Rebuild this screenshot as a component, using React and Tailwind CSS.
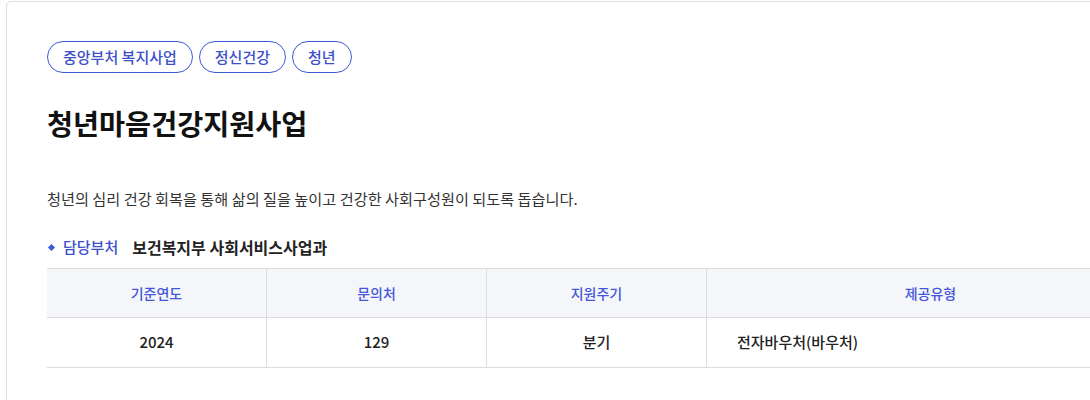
const tags = ["중앙부처 복지사업", "정신건강", "청년"];

const columns = ["기준연도", "문의처", "지원주기", "제공유형"];

export default function App() {
    return (
        <div
            className="w-[1090px] h-[400px] overflow-hidden bg-white"
            style={{ fontFamily: '"Noto Sans CJK KR", "Noto Sans", sans-serif' }}
        >
            <div className="ml-[6px] mt-[1px] w-[1190px] h-[420px] border border-[#dddddd] rounded-[5px] pl-[40px] pt-[39px]">
                {/* tags */}
                <div className="flex gap-[6px]">
                    {tags.map((t) => (
                        <span
                            key={t}
                            className="h-[32px] px-[15px] flex items-center rounded-full border border-[#3d5bd6] text-[#3d4fc9] text-[15px] font-medium"
                        >
                            {t}
                        </span>
                    ))}
                </div>

                <h1 className="mt-[30px] text-[28.3px] leading-[40px] font-bold text-[#111111]">
                    청년마음건강지원사업
                </h1>

                <p className="mt-[43px] text-[15.2px] leading-[24px] text-[#333333]">
                    청년의 심리 건강 회복을 통해 삶의 질을 높이고 건강한 사회구성원이 되도록 돕습니다.
                </p>

                <div className="mt-[25px] flex items-center text-[15px] leading-[24px]">
                    <span className="w-[5px] h-[5px] bg-[#3d5bd6] rotate-45 ml-[2px] mr-[9px]"></span>
                    <span className="text-[#3d4fc9] font-medium">담당부처</span>
                    <span className="ml-[14px] text-[16px] font-bold text-[#222222]">보건복지부 사회서비스사업과</span>
                </div>

                {/* table */}
                <div className="mt-[9px] w-[1107px] border-t border-b border-[#dddddd]">
                    <div className="grid grid-cols-[220px_220px_220px_1fr] h-[49px] bg-[#f5f6fa] border-b border-[#dddddd]">
                        {columns.map((c, i) => (
                            <div
                                key={c}
                                className={
                                    "flex items-center justify-center text-[14px] font-medium text-[#4457d9] " +
                                    (i < 3 ? "border-r border-[#dddddd]" : "")
                                }
                            >
                                {c}
                            </div>
                        ))}
                    </div>
                    <div className="grid grid-cols-[220px_220px_220px_1fr] h-[49px] text-[15px] font-medium text-[#222222]">
                        <div className="flex items-center justify-center border-r border-[#dddddd]">2024</div>
                        <div className="flex items-center justify-center border-r border-[#dddddd]">129</div>
                        <div className="flex items-center justify-center border-r border-[#dddddd]">분기</div>
                        <div className="flex items-center pl-[30px]">전자바우처(바우처)</div>
                    </div>
                </div>
            </div>
        </div>
    );
}
